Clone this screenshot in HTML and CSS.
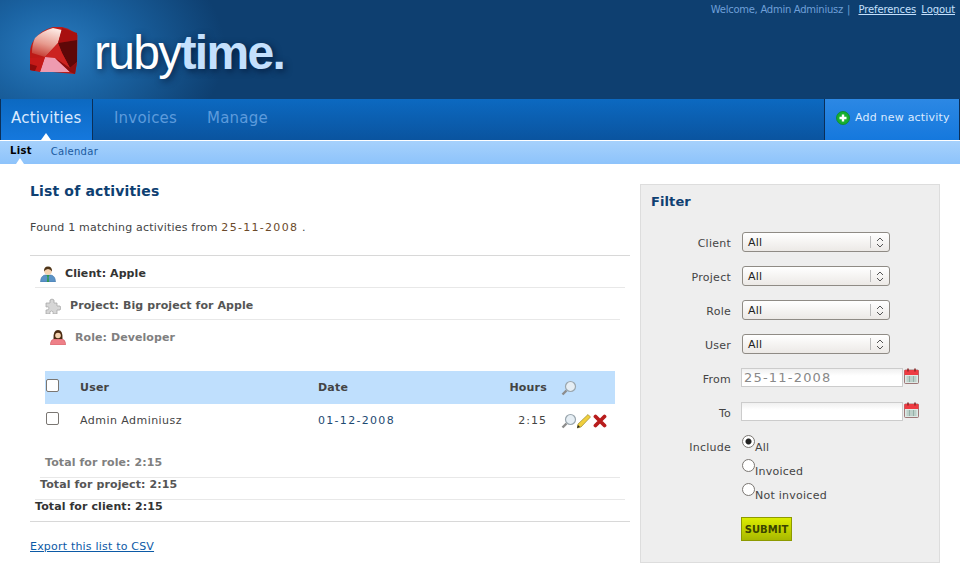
FILE: index.html
```html
<!DOCTYPE html>
<html lang="en">
<head>
<meta charset="utf-8">
<title>Rubytime</title>
<link rel="stylesheet" href="styles.css">
</head>
<body>
<header class="masthead">
  <div class="brand">
    <svg class="gem" viewBox="0 0 50 50" width="50" height="50" aria-hidden="true">
      <defs>
        <linearGradient id="pale" x1="0.6" y1="0" x2="0.3" y2="1">
          <stop offset="0" stop-color="#fce8e2"/>
          <stop offset="0.55" stop-color="#e79a8e"/>
          <stop offset="1" stop-color="#c43a30"/>
        </linearGradient>
      </defs>
      <path d="M24 1 Q12 4 5 14 Q1 20 1 26 L1 44 L46 48 L48 36 L48.500 9 Q42 3 33 1 Z" fill="#bd1a16"/>
      <path d="M24 2 L33 4 L29 17 L16 31 L3 27 Q3 18 6 12 Q13 5 24 2 Z" fill="url(#pale)"/>
      <path d="M33 2 L48 7 L48 14 L29 17 Z" fill="#a81010"/>
      <path d="M29 17 L48 14 L48 36 L41 42 L33 27 Z" fill="#5e0808"/>
      <path d="M29 17 L33 27 L41 42 L26 32 L16 31 Z" fill="#cc2320"/>
      <path d="M16 31 L26 32 L41 46 L11 46 Z" fill="#ee9bb0"/>
      <path d="M1 32 L16 31 L11 46 L1 44 Z" fill="#c51a18"/>
      <path d="M1 38 L8 40 L6 45 L1 44 Z" fill="#8d0c0c"/>
      <path d="M41 42 L48 36 L46 48 L41 46 L26 32 Z" fill="#8e0e0e"/>
    </svg>
    <div class="wordmark"><span class="ruby">ruby</span><span class="time">time.</span></div>
  </div>
  <div class="userbar">
    <span class="welcome">Welcome, Admin Adminiusz</span><span class="pipe">|</span>
    <a href="#" class="userlink">Preferences</a>
    <a href="#" class="userlink">Logout</a>
  </div>
</header>
<nav class="mainnav">
  <a href="#" class="tab active">Activities</a>
  <a href="#" class="tab">Invoices</a>
  <a href="#" class="tab">Manage</a>
  <a href="#" class="addnew">
    <svg class="plus" viewBox="0 0 14 14" width="14" height="14" aria-hidden="true">
      <circle cx="7" cy="7" r="6.500" fill="#18b030" stroke="#0e8a22" stroke-width="0.800"/>
      <path d="M3.500 7h7M7 3.500v7" stroke="#fff" stroke-width="2.400"/>
    </svg>
    Add new activity
  </a>
</nav>
<nav class="subnav">
  <a href="#" class="subtab current">List</a>
  <a href="#" class="subtab">Calendar</a>
</nav>
<main class="page">
  <section class="content">
    <h1 class="title">List of activities</h1>
    <p class="found">Found 1 matching activities from <span class="date">25-11-2008</span> .</p>
    <div class="report">
      <div class="level">
        <h2 class="group client">
          <svg class="gicon" viewBox="0 0 16 16" width="16" height="16" aria-hidden="true">
            <path d="M0.500 16 Q0.500 10 5 9 L11 9 Q15.500 10 15.500 16 Z" fill="#5b93c7" stroke="#3a6f9f" stroke-width="0.500"/>
            <path d="M6.500 9 L9.500 9 L8.600 11 L9 16 L7 16 L7.400 11 Z" fill="#2e9a4a"/>
            <circle cx="8" cy="5" r="3.800" fill="#f4d3b0"/>
            <path d="M4 5.500 Q3.800 0.500 8 0.500 Q12.200 0.500 12 5.500 Q10.500 3 8 3 Q5.500 3 4 5.500 Z" fill="#4e3418"/>
          </svg>
          Client: Apple
        </h2>
        <div class="level">
          <h2 class="group project">
            <svg class="gicon" viewBox="0 0 16 16" width="16" height="16" aria-hidden="true">
              <path d="M1 5 H5 Q4 1 7 1 Q10 1 9 5 H12 V8 Q16 7 16 10 Q16 13 12 12 V16 H8 Q9 13 6.500 13 Q4 13 5 16 H1 V12 Q4 12.500 4 10 Q4 8 1 9 Z" fill="#d6d6d6" stroke="#a2a2a2" stroke-width="0.700"/>
            </svg>
            Project: Big project for Apple
          </h2>
          <div class="level">
            <h2 class="group role">
              <svg class="gicon" viewBox="0 0 16 16" width="16" height="16" aria-hidden="true">
                <path d="M0.500 16 L0.500 14 Q1 10 5 10 L11 10 Q15 10 15.500 14 L15.500 16 Z" fill="#ee8088" stroke="#c9545c" stroke-width="0.500"/>
                <path d="M3.500 10 Q3 1 8 1 Q13 1 12.500 10 Z" fill="#4a2a10"/>
                <circle cx="8" cy="6.500" r="2.800" fill="#f4d3b0"/>
              </svg>
              Role: Developer
            </h2>
            <table class="grid">
              <thead>
                <tr>
                  <th class="c-check"><input type="checkbox" class="box"></th>
                  <th class="c-user">User</th>
                  <th class="c-date">Date</th>
                  <th class="c-hours">Hours</th>
                  <th class="c-act">
                    <svg class="mini" viewBox="0 0 16 16" width="16" height="16" aria-hidden="true"><circle cx="9.500" cy="6.500" r="5" fill="#e6eef4" stroke="#9aa6ae" stroke-width="1.200"/><path d="M5.500 10.500 L1.500 14.500" stroke="#8c8c8c" stroke-width="2.400"/></svg>
                  </th>
                </tr>
              </thead>
              <tbody>
                <tr>
                  <td class="c-check"><input type="checkbox" class="box"></td>
                  <td class="c-user">Admin Adminiusz</td>
                  <td class="c-date blue">01-12-2008</td>
                  <td class="c-hours num">2:15</td>
                  <td class="c-act">
                    <span class="minis">
                      <svg class="mini" viewBox="0 0 16 16" width="16" height="16" aria-hidden="true"><circle cx="9.500" cy="6.500" r="5" fill="#e6eef4" stroke="#9aa6ae" stroke-width="1.200"/><path d="M5.500 10.500 L1.500 14.500" stroke="#8c8c8c" stroke-width="2.400"/></svg>
                      <svg class="mini" viewBox="0 0 16 16" width="16" height="16" aria-hidden="true"><path d="M0 15 L1 11 L11 1.500 L13.500 4 L4 14 Z" fill="#f0cf3e" stroke="#8a7a20" stroke-width="0.600"/><path d="M0 15 L1 12 L3 14 Z" fill="#222"/></svg>
                      <svg class="mini" viewBox="0 0 16 16" width="16" height="16" aria-hidden="true"><path d="M2.500 3.500 L11.500 12.500 M11.500 3.500 L2.500 12.500" stroke="#b81c1c" stroke-width="3.800" stroke-linecap="round"/></svg>
                    </span>
                  </td>
                </tr>
              </tbody>
            </table>
            <div class="total t-role">Total for role: 2:15</div>
          </div>
          <div class="total t-project">Total for project: 2:15</div>
        </div>
        <div class="total t-client">Total for client: 2:15</div>
      </div>
    </div>
    <a href="#" class="export">Export this list to CSV</a>
  </section>
  <aside class="filter">
    <h2 class="filter-title">Filter</h2>
    <form class="fields">
      <label class="flabel">Client</label>
      <div class="fval sel-row"><div class="sel"><span class="sel-text">All</span><span class="sel-arrow"><svg viewBox="0 0 8 11" width="8" height="11" aria-hidden="true"><path d="M1 4 L4 1 L7 4 M1 7 L4 10 L7 7" fill="none" stroke="#555" stroke-width="1"/></svg></span></div></div>
      <label class="flabel">Project</label>
      <div class="fval sel-row"><div class="sel"><span class="sel-text">All</span><span class="sel-arrow"><svg viewBox="0 0 8 11" width="8" height="11" aria-hidden="true"><path d="M1 4 L4 1 L7 4 M1 7 L4 10 L7 7" fill="none" stroke="#555" stroke-width="1"/></svg></span></div></div>
      <label class="flabel">Role</label>
      <div class="fval sel-row"><div class="sel"><span class="sel-text">All</span><span class="sel-arrow"><svg viewBox="0 0 8 11" width="8" height="11" aria-hidden="true"><path d="M1 4 L4 1 L7 4 M1 7 L4 10 L7 7" fill="none" stroke="#555" stroke-width="1"/></svg></span></div></div>
      <label class="flabel">User</label>
      <div class="fval sel-row"><div class="sel"><span class="sel-text">All</span><span class="sel-arrow"><svg viewBox="0 0 8 11" width="8" height="11" aria-hidden="true"><path d="M1 4 L4 1 L7 4 M1 7 L4 10 L7 7" fill="none" stroke="#555" stroke-width="1"/></svg></span></div></div>
      <label class="flabel">From</label>
      <div class="fval date-row"><div class="dateinput">25-11-2008</div>
        <svg class="cal" viewBox="0 0 15 16" width="15" height="16" aria-hidden="true"><rect x="0.500" y="2" width="14" height="13.500" rx="1" fill="#dfeae6" stroke="#8a5a5a" stroke-width="0.800"/><rect x="0.500" y="2" width="14" height="5" fill="#ee3b42"/><path d="M4 0.500v3M11 0.500v3" stroke="#8e2a2a" stroke-width="1.600"/><path d="M2.500 9h10M2.500 11h10M2.500 13h10M5.500 8v6M9.500 8v6" stroke="#8aa89e" stroke-width="0.800"/></svg>
      </div>
      <label class="flabel">To</label>
      <div class="fval date-row"><div class="dateinput"></div>
        <svg class="cal" viewBox="0 0 15 16" width="15" height="16" aria-hidden="true"><rect x="0.500" y="2" width="14" height="13.500" rx="1" fill="#dfeae6" stroke="#8a5a5a" stroke-width="0.800"/><rect x="0.500" y="2" width="14" height="5" fill="#ee3b42"/><path d="M4 0.500v3M11 0.500v3" stroke="#8e2a2a" stroke-width="1.600"/><path d="M2.500 9h10M2.500 11h10M2.500 13h10M5.500 8v6M9.500 8v6" stroke="#8aa89e" stroke-width="0.800"/></svg>
      </div>
      <label class="flabel">Include</label>
      <div class="fval radios">
        <div class="radio"><input type="radio" name="inc" class="rad" checked><span>All</span></div>
        <div class="radio"><input type="radio" name="inc" class="rad"><span>Invoiced</span></div>
        <div class="radio"><input type="radio" name="inc" class="rad"><span>Not invoiced</span></div>
      </div>
      <div></div>
      <div class="fval"><button type="button" class="submit">SUBMIT</button></div>
    </form>
  </aside>
</main>
</body>
</html>
```
FILE: styles.css
```css
* { box-sizing: border-box; }
html, body { margin: 0; padding: 0; }
body {
  width: 960px;
  height: 573px;
  overflow: hidden;
  background: #fff;
  font-family: "DejaVu Sans", sans-serif;
  font-size: 11px;
  color: #444;
}
a { color: inherit; }

.masthead {
  height: 99px;
  display: flex;
  justify-content: space-between;
  background:
    radial-gradient(ellipse 170px 120px at 55px 50px, #2a7cc0 0%, rgba(30,110,178,.75) 40%, rgba(14,64,113,0) 100%),
    #0e3f70;
}
.brand { display: flex; align-items: flex-start; padding: 26px 0 0 29px; }
.gem { display: block; }
.wordmark {
  margin: -3px 0 0 15px;
  font-family: "Liberation Sans", sans-serif;
  font-size: 48px;
  line-height: 60px;
  letter-spacing: -1.7px;
  text-shadow: 2px 2px 7px rgba(0,20,50,.8);
}
.ruby { color: #fff; }
.time { color: #c4e0fd; font-weight: bold; }
.userbar {
  padding: 4px 5px 0 0;
  font-size: 10px;
  line-height: 12px;
  color: #6f9fd8;
  white-space: nowrap;
}
.welcome { letter-spacing: -.27px; }
.pipe { margin-left: 4px; margin-right: 3px; }
.userlink { color: #c4e0fd; margin-left: 2px; letter-spacing: -.1px; }

.mainnav {
  height: 42px;
  display: flex;
  align-items: stretch;
  background: linear-gradient(#0c69c1, #0a549f);
  border-bottom: 1px solid #fff;
  font-size: 15px;
  letter-spacing: .2px;
}
.tab {
  display: block;
  padding: 9px 10px 0;
  margin-right: 10px;
  color: #5d9bdc;
  text-decoration: none;
  line-height: 20px;
}
.tab.active {
  position: relative;
  width: 93px;
  margin-right: 11px;
  color: #dbeaff;
  background: linear-gradient(#0c69c1, #1578dd);
  border-left: 1px solid #0b2f58;
  border-right: 1px solid #0b2f58;
}
.tab.active::after {
  content: "";
  position: absolute;
  left: 40px;
  bottom: 0;
  border: 5px solid transparent;
  border-top: 0;
  border-bottom: 7px solid #fff;
}
.addnew {
  margin-left: auto;
  width: 136px;
  display: flex;
  align-items: center;
  gap: 5px;
  padding: 0 0 4px 11px;
  border-left: 1px solid #0b2f58;
  border-right: 1px solid #0b2f58;
  background: linear-gradient(#2c88e4, #1578dd);
  color: #dbeaff;
  font-size: 11px;
  letter-spacing: .2px;
  text-decoration: none;
  white-space: nowrap;
}
.plus { display: block; }

.subnav {
  height: 23px;
  display: flex;
  background: linear-gradient(#a6d1fc, #8dc3fb);
  font-size: 10px;
  letter-spacing: .3px;
}
.subtab {
  display: block;
  padding: 4px 0 0;
  margin-left: 19px;
  line-height: 14px;
  color: #1a5a9e;
  text-decoration: none;
}
.subtab.current {
  position: relative;
  margin-left: 10px;
  padding-top: 3px;
  color: #000;
  font-weight: bold;
}
.subtab.current::after {
  content: "";
  position: absolute;
  left: 6px;
  bottom: 0;
  border: 4px solid transparent;
  border-top: 0;
  border-bottom: 6px solid #fff;
}

.page { display: flex; align-items: flex-start; padding: 20px 20px 0 30px; }
.content { width: 600px; margin-right: 10px; }
.title {
  margin: 0;
  font-size: 14px;
  line-height: 15px;
  color: #0e4072;
  letter-spacing: .15px;
  font-weight: bold;
}
.found { margin: 22px 0 0; line-height: 14px; letter-spacing: .19px; height: 34px; }
.date { color: #6b4a2a; letter-spacing: 1.3px; }
.report { border-top: 1px solid #d8d8d8; border-bottom: 1px solid #d8d8d8; }
.level { margin: 0 5px; }
.group {
  margin: 0;
  height: 32px;
  display: flex;
  align-items: center;
  gap: 9px;
  padding: 4px 0 0 5px;
  font-size: 11px;
  font-weight: bold;
  letter-spacing: .08px;
  border-bottom: 1px solid #e8e8e8;
}
.gicon { display: block; }
.client { color: #333; }
.project { color: #555; }
.role { color: #808080; border-bottom: 0; padding-top: 2px; }

.grid {
  width: 570px;
  margin: 19px 0 0;
  border-collapse: collapse;
  table-layout: fixed;
  font-size: 11px;
  letter-spacing: .45px;
}
.grid th {
  height: 33px;
  background: #bfdffd;
  text-align: left;
  font-weight: bold;
  color: #444;
  padding: 0;
  letter-spacing: .2px;
}
.grid td { height: 33px; padding: 0; color: #444; }
.c-check { width: 35px; }
.c-user { width: 238px; }
.c-date { width: 150px; }
.c-hours { width: 79px; text-align: right !important; }
.c-act { padding-left: 14px !important; }
.num { letter-spacing: 1px; }
.box {
  appearance: none;
  display: block;
  margin: 0 0 4px 1px;
  width: 13px;
  height: 13px;
  border: 1px solid #7a7672;
  border-radius: 2px;
  background: #fff;
}
.blue { color: #1d4a72 !important; letter-spacing: 1.3px; }
.mini { display: block; flex: none; }
.minis { display: flex; }
.total {
  font-weight: bold;
  font-size: 11px;
  letter-spacing: .1px;
  height: 22px;
  line-height: 14px;
}
.t-role { color: #808080; margin-top: 19px; height: 21px; }
.t-project { color: #555; border-top: 1px solid #e8e8e8; }
.t-client { color: #333; border-top: 1px solid #e8e8e8; }
.export {
  display: block;
  margin-top: 18px;
  color: #0c5aa6;
  letter-spacing: .2px;
  font-size: 11px;
  line-height: 14px;
}

.filter {
  width: 300px;
  height: 379px;
  background: #eee;
  border: 1px solid #ddd;
  padding: 8px 10px;
}
.filter-title { margin: 0; font-size: 13px; line-height: 18px; color: #0e4072; font-weight: bold; letter-spacing: .1px; }
.fields {
  display: grid;
  grid-template-columns: 80px 1fr;
  column-gap: 10px;
  margin-top: 21px;
  letter-spacing: .25px;
}
.flabel { text-align: right; line-height: 20px; padding-top: 2px; height: 34px; }
.fval { height: 34px; }
.sel-row { padding-left: 1px; }
.sel {
  width: 148px;
  height: 20px;
  display: flex;
  align-items: center;
  border: 1px solid #8f8b85;
  border-radius: 3px;
  background: linear-gradient(#fff, #ece9e6);
  color: #222;
  font-size: 11px;
}
.sel-text { flex: 1; padding-left: 5px; }
.sel-arrow { width: 19px; height: 12px; border-left: 1px solid #bbb; display: flex; align-items: center; justify-content: center; }
.sel-arrow svg { display: block; }
.date-row { display: flex; align-items: flex-start; }
.dateinput {
  width: 162px;
  height: 19px;
  border: 1px solid #ccc;
  background: linear-gradient(#f0f0f0, #fff 40%);
  color: #888;
  font-size: 13px;
  letter-spacing: 1.2px;
  line-height: 17px;
  padding-left: 2px;
}
.cal { display: block; margin-left: 1px; }
.radios { height: auto; margin-top: -3px; }
.radio { height: 24px; display: flex; align-items: flex-start; padding-left: 1px; }
.radio span { margin-top: 8px; line-height: 14px; }
.rad {
  appearance: none;
  margin: 2px 0 0;
  width: 13px;
  height: 13px;
  border: 1px solid #7a7672;
  border-radius: 50%;
  background: #fff;
}
.rad:checked { background: radial-gradient(circle, #222 0, #222 2.5px, #fff 3.5px); }
.submit {
  display: block;
  margin-top: 12px;
  width: 51px;
  height: 24px;
  border: 1px solid #8d9a00;
  padding: 0;
  background: linear-gradient(#dcec00, #a8b800);
  color: #3c4400;
  font-family: "DejaVu Sans", sans-serif;
  font-size: 10px;
  font-weight: bold;
}
```
